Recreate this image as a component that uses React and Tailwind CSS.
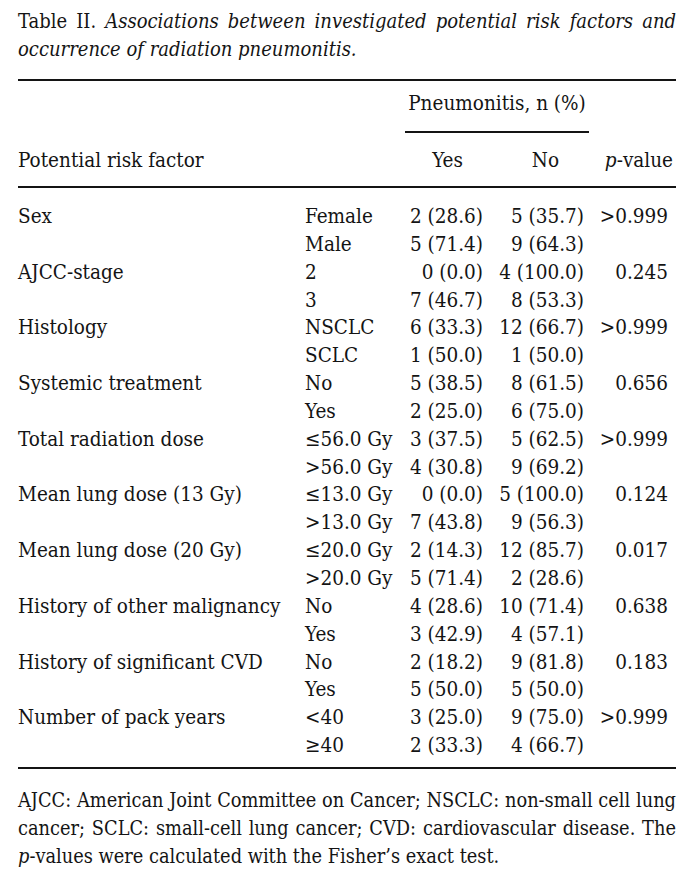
const rows = [
  ["Sex", "Female", "2 (28.6)", "5 (35.7)", ">0.999"],
  ["", "Male", "5 (71.4)", "9 (64.3)", ""],
  ["AJCC-stage", "2", "0 (0.0)", "4 (100.0)", "0.245"],
  ["", "3", "7 (46.7)", "8 (53.3)", ""],
  ["Histology", "NSCLC", "6 (33.3)", "12 (66.7)", ">0.999"],
  ["", "SCLC", "1 (50.0)", "1 (50.0)", ""],
  ["Systemic treatment", "No", "5 (38.5)", "8 (61.5)", "0.656"],
  ["", "Yes", "2 (25.0)", "6 (75.0)", ""],
  ["Total radiation dose", "≤56.0 Gy", "3 (37.5)", "5 (62.5)", ">0.999"],
  ["", ">56.0 Gy", "4 (30.8)", "9 (69.2)", ""],
  ["Mean lung dose (13 Gy)", "≤13.0 Gy", "0 (0.0)", "5 (100.0)", "0.124"],
  ["", ">13.0 Gy", "7 (43.8)", "9 (56.3)", ""],
  ["Mean lung dose (20 Gy)", "≤20.0 Gy", "2 (14.3)", "12 (85.7)", "0.017"],
  ["", ">20.0 Gy", "5 (71.4)", "2 (28.6)", ""],
  ["History of other malignancy", "No", "4 (28.6)", "10 (71.4)", "0.638"],
  ["", "Yes", "3 (42.9)", "4 (57.1)", ""],
  ["History of significant CVD", "No", "2 (18.2)", "9 (81.8)", "0.183"],
  ["", "Yes", "5 (50.0)", "5 (50.0)", ""],
  ["Number of pack years", "<40", "3 (25.0)", "9 (75.0)", ">0.999"],
  ["", "≥40", "2 (33.3)", "4 (66.7)", ""],
];

const cols = "grid grid-cols-[286px_100px_79px_101px_1fr]";
const justLine = "whitespace-nowrap text-justify [text-align-last:justify]";

export default function App() {
  return (
    <div className="w-[689px] bg-white pl-[18px] pr-[13px] pt-[7px] pb-6 text-[#141414] text-[20.5px] leading-[28px] font-['DejaVu_Serif_Condensed','DejaVu_Serif',serif]">
      <div className="text-[20px]">
        <p className={justLine}>
          Table II. <i>Associations between investigated potential risk factors and</i>
        </p>
        <p className="whitespace-nowrap"><i>occurrence of radiation pneumonitis.</i></p>
      </div>

      <div className="mt-[16px] border-t-2 border-[#141414]" />
      <div className="pt-[8px] ml-[387px] w-[184px] text-center whitespace-nowrap">Pneumonitis, n (%)</div>
      <div className="mt-[14px] ml-[387px] w-[184px] border-t-2 border-[#141414]" />
      <div className={`${cols} pt-[13px] pb-[12px]`}>
        <span>Potential risk factor</span>
        <span />
        <span className="text-right pr-[20px]">Yes</span>
        <span className="text-right pr-[25px]">No</span>
        <span className="text-right pr-[3px] whitespace-nowrap"><i>p</i>-value</span>
      </div>
      <div className="border-t-2 border-[#141414]" />

      <div className="pt-[15px] pb-[7px] leading-[27.85px]">
        {rows.map((r, i) => (
          <div key={i} className={cols}>
            <span className="whitespace-nowrap">{r[0]}</span>
            <span className="whitespace-nowrap pl-[1px]">{r[1]}</span>
            <span className="text-right whitespace-nowrap">{r[2]}</span>
            <span className="text-right whitespace-nowrap">{r[3]}</span>
            <span className="text-right pr-[8px]">{r[4]}</span>
          </div>
        ))}
      </div>
      <div className="border-t-2 border-[#141414]" />

      <div className="pt-[18px] text-[19.8px]">
        <p className={justLine}>AJCC: American Joint Committee on Cancer; NSCLC: non-small cell lung</p>
        <p className={justLine}>cancer; SCLC: small-cell lung cancer; CVD: cardiovascular disease. The</p>
        <p className="whitespace-nowrap"><i>p</i>-values were calculated with the Fisher’s exact test.</p>
      </div>
    </div>
  );
}
